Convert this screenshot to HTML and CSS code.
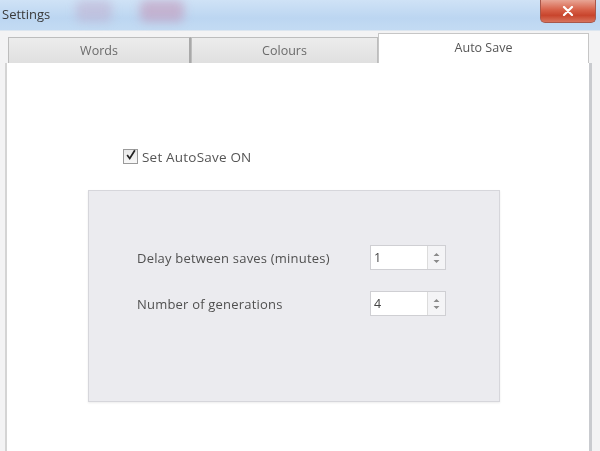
FILE: index.html
```html
<!DOCTYPE html>
<html>
<head>
<meta charset="utf-8">
<link rel="stylesheet" href="styles.css">
</head>
<body>
<div class="window">
  <div class="titlebar">
    <span class="title">Settings</span>
    <span class="smudge smudge-a"></span>
    <span class="smudge smudge-b"></span>
    <span class="spacer"></span>
    <span class="close">
      <svg width="12" height="10" viewBox="0 0 12 10"><path d="M2 1 L10 9 M10 1 L2 9" stroke="#fff" stroke-width="2.2" stroke-linecap="round"/></svg>
    </span>
  </div>
  <div class="frame">
    <div class="tabs">
      <div class="tab tab-words">Words</div>
      <div class="tab tab-colours">Colours</div>
      <div class="tab tab-active">Auto Save</div>
    </div>
    <div class="panel">
      <label class="check-row">
        <span class="checkbox">
          <svg width="14" height="14" viewBox="0 0 14 14"><path d="M2.5 7 L5.5 11 L11.5 1.5" fill="none" stroke="#222" stroke-width="2"/></svg>
        </span>
        <span class="check-label">Set AutoSave ON</span>
      </label>
      <div class="group">
        <div class="field-row">
          <span class="field-label">Delay between saves (minutes)</span>
          <div class="spinner">
            <span class="spin-value">1</span>
            <span class="spin-buttons">
              <svg width="9" height="14" viewBox="0 0 9 14"><path d="M1.5 5 L4.5 2 L7.5 5 Z M1.5 9 L4.5 12 L7.5 9 Z" fill="#8a8a8a"/></svg>
            </span>
          </div>
        </div>
        <div class="field-row">
          <span class="field-label">Number of generations</span>
          <div class="spinner">
            <span class="spin-value">4</span>
            <span class="spin-buttons">
              <svg width="9" height="14" viewBox="0 0 9 14"><path d="M1.5 5 L4.5 2 L7.5 5 Z M1.5 9 L4.5 12 L7.5 9 Z" fill="#8a8a8a"/></svg>
            </span>
          </div>
        </div>
      </div>
    </div>
  </div>
</div>
</body>
</html>
```
FILE: styles.css
```css
html, body {
  margin: 0;
  padding: 0;
  background: #ffffff;
}
.window {
  width: 600px;
  height: 451px;
  overflow: hidden;
  display: flex;
  flex-direction: column;
  font-family: "Open Sans", "Noto Sans", sans-serif;
  font-size: 12px;
  color: #505050;
  filter: blur(0.5px);
  background: #f2f3f5;
}
.titlebar {
  height: 31px;
  flex: none;
  display: flex;
  align-items: flex-start;
  background: linear-gradient(to bottom, #cfe2f6 0%, #bcd6f1 60%, #c3dbf3 100%);
  border-bottom: 1px solid #dce6f0;
  box-sizing: border-box;
}
.title {
  margin: 5px 0 0 2px;
  font-size: 13px;
  color: #3a3a3a;
  width: 70px;
}
.smudge {
  height: 22px;
  margin-top: 0;
  border-radius: 6px;
  filter: blur(5px);
}
.smudge-a {
  width: 36px;
  margin-left: 4px;
  background: rgba(190, 160, 195, 0.4);
}
.smudge-b {
  width: 44px;
  margin-left: 28px;
  background: rgba(195, 140, 175, 0.5);
}
.spacer {
  flex: 1;
}
.close {
  width: 56px;
  height: 23px;
  margin-right: 4px;
  display: flex;
  align-items: center;
  justify-content: center;
  background: linear-gradient(to bottom, #e8a595 0%, #d76048 45%, #c8452d 70%, #d8735c 100%);
  border: 1px solid #a8574a;
  border-top: none;
  border-radius: 0 0 5px 5px;
  box-sizing: border-box;
}
.frame {
  flex: 1;
  display: flex;
  flex-direction: column;
  padding: 2px 8px 0 5px;
  background: #f3f3f4;
}
.tabs {
  display: flex;
  align-items: flex-end;
  height: 30px;
  flex: none;
  padding-left: 3px;
}
.tab {
  height: 26px;
  box-sizing: border-box;
  display: flex;
  align-items: center;
  justify-content: center;
  background: linear-gradient(to bottom, #ececec, #e0e0e0);
  border: 1px solid #bdbdbd;
  border-bottom: none;
  color: #6a6a6a;
  font-size: 12.5px;
}
.tab-words {
  width: 183px;
  border-right: 2px solid #a9a9a9;
}
.tab-colours {
  width: 187px;
}
.tab-active {
  width: 211px;
  height: 30px;
  background: #ffffff;
  border-color: #c6c6c6;
  color: #555;
  padding-bottom: 2px;
}
.panel {
  flex: 1;
  background: #ffffff;
  border-left: 2px solid #d4d4d4;
  border-right: 3px solid #c9cbcf;
  display: flex;
  flex-direction: column;
}
.check-row {
  display: flex;
  align-items: center;
  gap: 4px;
  margin: 85px 0 0 116px;
  height: 17px;
}
.checkbox {
  width: 13px;
  height: 13px;
  border: 1px solid #9a9a9a;
  background: linear-gradient(#e8e8e8, #f8f8f8);
  display: flex;
  align-items: center;
  justify-content: center;
  overflow: visible;
}
.checkbox svg {
  margin-top: -3px;
  margin-left: 1px;
}
.check-label {
  font-size: 13.5px;
  letter-spacing: 0.2px;
  color: #555;
}
.group {
  margin: 25px 0 0 81px;
  width: 412px;
  height: 212px;
  box-sizing: border-box;
  background: #ebebef;
  border: 1px solid #d6d6db;
  box-shadow: 0 1px 2px rgba(0, 0, 0, 0.08);
  padding: 54px 0 0 48px;
  display: flex;
  flex-direction: column;
  gap: 21px;
}
.field-row {
  display: flex;
  align-items: center;
  height: 25px;
}
.field-label {
  width: 233px;
  font-size: 13px;
  letter-spacing: 0.2px;
  color: #505050;
}
.spinner {
  width: 76px;
  height: 25px;
  box-sizing: border-box;
  border: 1px solid #cfcfd3;
  background: #f4f4f6;
  display: flex;
}
.spin-value {
  width: 57px;
  background: #ffffff;
  border-right: 1px solid #dcdcdc;
  padding-left: 3px;
  box-sizing: border-box;
  line-height: 23px;
  font-size: 12.5px;
  color: #444;
}
.spin-buttons {
  flex: 1;
  display: flex;
  align-items: center;
  justify-content: center;
}
```
